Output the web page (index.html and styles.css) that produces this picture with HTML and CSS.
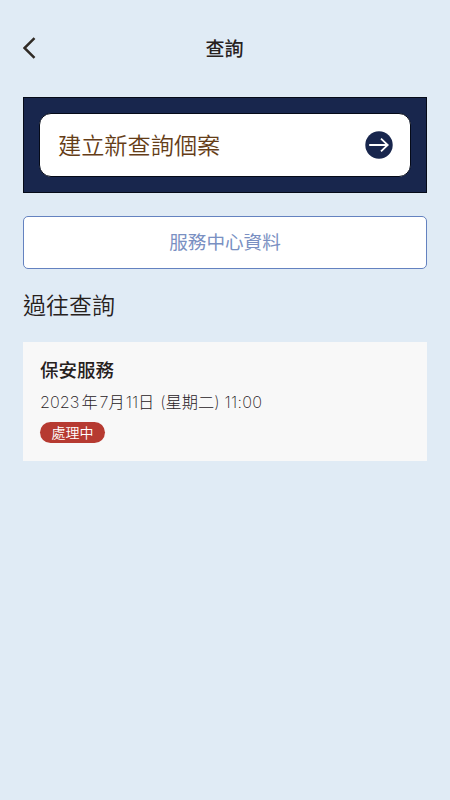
FILE: index.html
```html
<!DOCTYPE html>
<html lang="zh-Hant">
<head>
<meta charset="utf-8">
<title>查詢</title>
<link rel="stylesheet" href="styles.css">
</head>
<body>
<header class="header">
  <svg class="back" width="14" height="24" viewBox="0 0 14 24"><path d="M11.500 1.200 1.500 11l10 9.800"/></svg>
  <h1 class="title">查詢</h1>
</header>
<main class="content">
  <section class="hero">
    <div class="create">
      <span class="create-label">建立新查詢個案</span>
      <svg class="arrow" width="28" height="28" viewBox="0 0 28 28"><circle cx="14" cy="14" r="13.700"/><path d="M4.200 14h18.500M16 7.700l6.700 6.300-6.700 6.300"/></svg>
    </div>
  </section>
  <div class="center-info"><span>服務中心資料</span></div>
  <h2 class="heading">過往查詢</h2>
  <article class="card">
    <h3 class="card-title">保安服務</h3>
    <p class="date"><span>2023</span><span class="year">年</span><span>7</span><span class="month">月</span><span>11</span><span>日</span><span class="week">(星期二)</span><span class="time">11:00</span></p>
    <span class="badge"><span class="badge-label">處理中</span></span>
  </article>
</main>
</body>
</html>
```

FILE: styles.css
```css
* { box-sizing: border-box; }
body {
  margin: 0;
  min-height: 800px;
  background: #e0ebf5;
  color: #27211d;
  font-family: Inter, "Noto Sans CJK TC", sans-serif;
}
h1, h2, h3, p { margin: 0; }
.header {
  height: 97px;
  padding: 0 23px;
  display: grid;
  grid-template-columns: 14px 1fr 14px;
  align-items: center;
  justify-items: center;
}
.back { fill: none; stroke: #302a24; stroke-width: 2.5; }
.title { padding: 2px 1px 0 0; font-size: 19px; font-weight: 500; line-height: 28px; }
.content { padding: 0 23px; }
.hero {
  height: 96px;
  padding: 15px;
  background: #18264d;
  border: 1px solid #050a18;
}
.create {
  height: 64px;
  padding: 0 17px 0 18px;
  display: flex;
  align-items: center;
  justify-content: space-between;
  background: #fff;
  border: 1px solid #050a18;
  border-radius: 12px;
}
.create-label { padding-bottom: 2px; font-size: 23.200px; font-weight: 350; color: #653d17; }
.arrow { fill: #18264d; }
.arrow path { fill: none; stroke: #fff; stroke-width: 1.8; }
.center-info {
  height: 53px;
  margin-top: 23px;
  padding-bottom: 4px;
  display: flex;
  align-items: center;
  justify-content: center;
  background: #fff;
  border: 1px solid #6482c0;
  border-radius: 5px;
  color: #7a90c2;
  font-size: 18.600px;
}
.heading { margin-top: 21px; font-size: 23px; font-weight: 350; line-height: 32px; }
.card {
  height: 119px;
  margin-top: 20px;
  padding: 14px 17px;
  background: #f8f8f8;
}
.card-title { font-size: 18.500px; font-weight: 500; line-height: 28px; }
.date {
  margin-top: 5px;
  display: flex;
  font-size: 16.200px;
  font-weight: 250;
  line-height: 26px;
}
.year { margin: 0 2px; }
.month { margin-right: 1px; }
.week { margin: 0 5px 0 6px; }
.time { letter-spacing: 0.3px; }
.badge {
  width: 65px;
  height: 21px;
  margin-top: 7px;
  display: flex;
  align-items: center;
  justify-content: center;
  background: #b63a31;
  border-radius: 11px;
  color: #fff;
  font-size: 14px;
  font-weight: 350;
}
.badge-label { padding-bottom: 1px; }
```
